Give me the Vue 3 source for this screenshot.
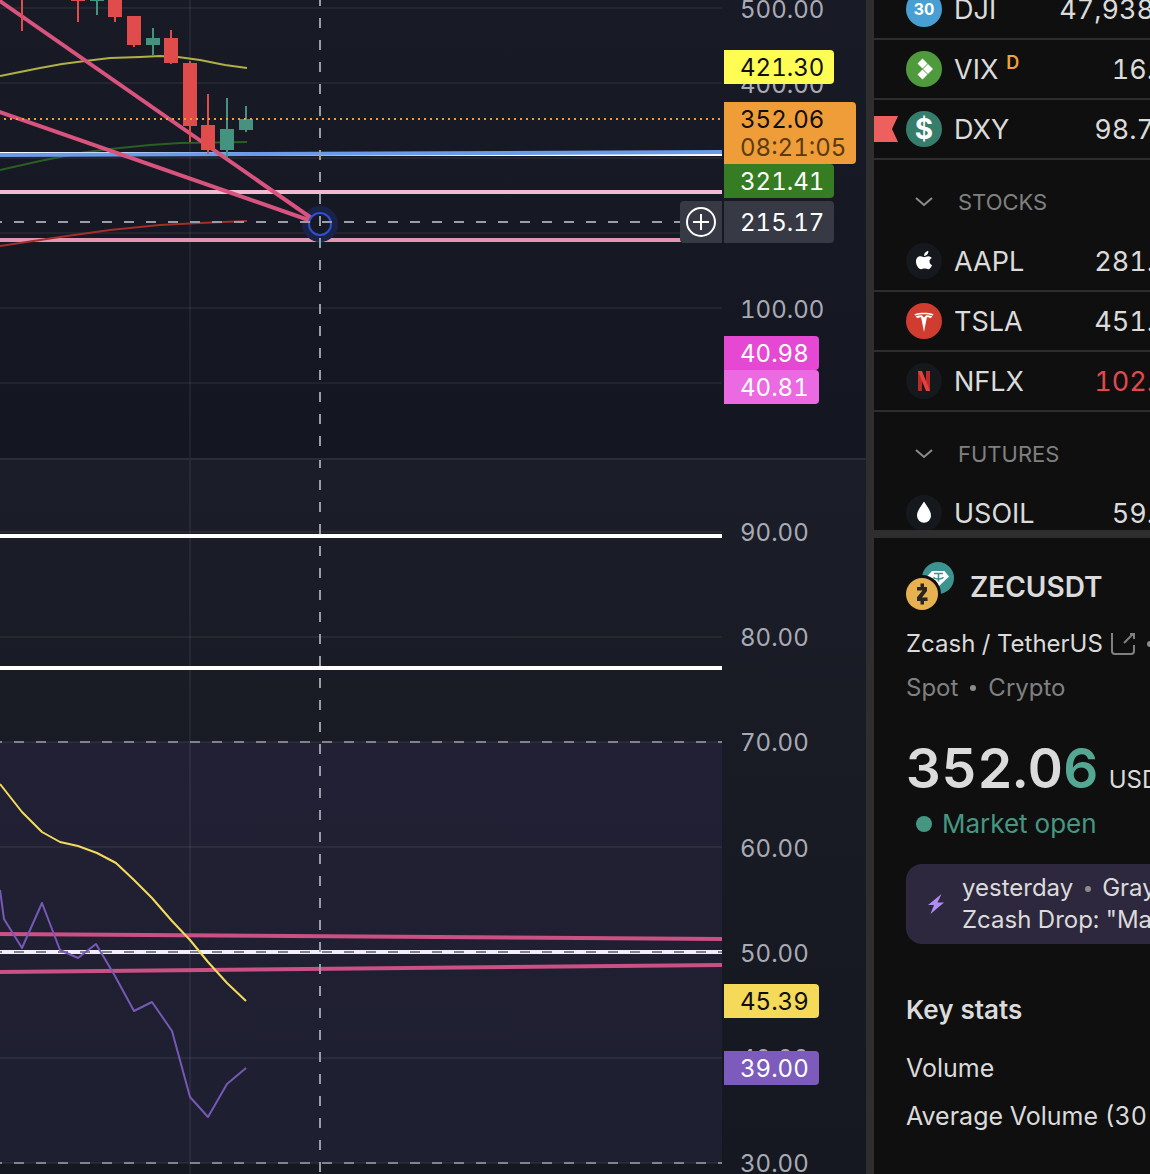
<template>
  <div class="workspace">
    <main class="chart">
      <section class="pane pane-price">
        <svg class="plot" aria-label="Price chart">
          <g class="grid">
            <line v-for="y in priceGrid" :key="y" x1="0" :y1="y" x2="100%" :y2="y" />
            <line x1="190" y1="0" x2="190" y2="100%" />
          </g>

          <polyline class="ma ma-yellow" :points="toPoints(maYellow)" />
          <polyline class="ma ma-green" :points="toPoints(maGreen)" />

          <line class="level level-white" x1="0" y1="154" x2="100%" y2="154" />
          <line class="level level-blue" x1="0" y1="155" x2="100%" y2="152" />
          <line class="level level-pink-light" x1="0" y1="192" x2="100%" y2="192" />
          <line class="level level-pink" x1="0" y1="240" x2="100%" y2="240" />
          <polyline class="ma ma-red" :points="toPoints(maRed)" />

          <circle class="anchor-halo" cx="320" cy="224" r="18" />
          <line class="trend" x1="-6" y1="-3" x2="320" y2="224" />
          <line class="trend" x1="-6" y1="110" x2="320" y2="224" />

          <g v-for="c in candles" :key="c.x" :class="c.up ? 'candle-up' : 'candle-down'">
            <rect :x="c.x - 1" :y="c.high" width="2" :height="c.low - c.high" />
            <rect v-if="c.bottom" :x="c.x - 7" :y="c.top" width="14" :height="c.bottom - c.top" />
          </g>

          <line class="last-price" x1="4" y1="119" x2="100%" y2="119" />

          <circle class="anchor" cx="320" cy="224" r="11" />

          <line class="crosshair" x1="-8" y1="222" x2="100%" y2="222" />
          <line class="crosshair" x1="320" y1="-4" x2="320" y2="100%" />
        </svg>

        <button class="add-alert" type="button" aria-label="Add alert at price">
          <svg width="32" height="32" viewBox="0 0 32 32">
            <circle cx="16" cy="16" r="14" />
            <path d="M16 8v16M8 16h16" />
          </svg>
        </button>

        <div class="axis">
          <span
            v-for="tick in priceTicks"
            :key="tick.text"
            class="tick"
            :style="{ top: tick.y + 'px' }"
            >{{ tick.text }}</span
          >
          <span
            v-for="tag in priceTags"
            :key="tag.text"
            class="tag"
            :class="tag.color"
            :style="{ top: tag.y + 'px' }"
          >
            {{ tag.text }}
            <small v-if="tag.countdown">{{ tag.countdown }}</small>
          </span>
        </div>
      </section>

      <section class="pane pane-rsi">
        <svg class="plot" aria-label="RSI chart">
          <defs>
            <linearGradient id="band" x1="0" y1="0" x2="0" y2="1">
              <stop offset="0" stop-color="#222034" />
              <stop offset="1" stop-color="#1e1f31" />
            </linearGradient>
          </defs>
          <rect x="0" y="282" width="100%" height="421" fill="url(#band)" />
          <g class="grid">
            <line v-for="y in rsiGrid" :key="y" x1="0" :y1="y" x2="100%" :y2="y" />
            <line x1="190" y1="0" x2="190" y2="100%" />
          </g>

          <line class="level level-white" x1="0" y1="76" x2="100%" y2="76" />
          <line class="level level-white" x1="0" y1="208" x2="100%" y2="208" />
          <line class="rsi-trend" x1="0" y1="474" x2="100%" y2="479" />
          <line class="rsi-trend" x1="0" y1="512" x2="100%" y2="505" />
          <line class="level level-mid" x1="0" y1="492" x2="100%" y2="492" />

          <line
            v-for="y in [282, 492, 703]"
            :key="y"
            class="band-edge"
            x1="-8"
            :y1="y"
            x2="100%"
            :y2="y"
          />
          <polyline class="rsi" :points="toPoints(rsi)" />
          <polyline class="rsi-ma" :points="toPoints(rsiMa)" />
          <line class="crosshair" x1="320" y1="-2" x2="320" y2="100%" />
        </svg>

        <div class="axis">
          <span
            v-for="tick in rsiTicks"
            :key="tick.text"
            class="tick"
            :style="{ top: tick.y + 'px' }"
            >{{ tick.text }}</span
          >
          <span
            v-for="tag in rsiTags"
            :key="tag.text"
            class="tag"
            :class="tag.color"
            :style="{ top: tag.y + 'px' }"
            >{{ tag.text }}</span
          >
        </div>
      </section>
    </main>

    <aside class="sidebar">
      <div class="watchlist">
        <table>
          <tbody v-for="group in groups" :key="group.name">
            <tr v-if="group.name" class="group-row">
              <th colspan="2" scope="rowgroup">
                <button type="button" class="group-toggle">
                  <svg width="20" height="12" viewBox="0 0 20 12">
                    <path d="M2 2l8 7 8-7" />
                  </svg>
                  {{ group.name }}
                </button>
              </th>
            </tr>
            <tr v-for="item in group.items" :key="item.symbol" class="symbol-row">
              <td>
                <svg v-if="item.flagged" class="flag" width="24" height="26" viewBox="0 0 24 26">
                  <path d="M0 0h24l-6 13 6 13H0z" />
                </svg>
                <div class="symbol">
                  <span class="logo" :class="'logo-' + item.symbol.toLowerCase()">
                    <template v-if="item.symbol === 'DJI'">30</template>
                    <template v-else-if="item.symbol === 'DXY'">$</template>
                    <svg v-else-if="item.symbol === 'VIX'" viewBox="0 0 36 36">
                      <path
                        d="M16.500 7.500l5 5-5 5-5-5zM22 13l5 5-5 5-5-5zM16.500 18.500l5 5-5 5-5-5z"
                      />
                    </svg>
                    <svg v-else-if="item.symbol === 'AAPL'" viewBox="0 0 36 36">
                      <path
                        d="M22.300 8c.2 1.500-.4 2.700-1.200 3.600-.8.900-1.900 1.400-3 1.300-.1-1.400.5-2.600 1.200-3.400.8-.9 2-1.500 3-1.500zM25.700 15.100c-1.500.9-2.300 2-2.200 3.500.1 1.700 1 2.900 2.500 3.600-.8 2-2.200 4-3.900 4-1.300 0-1.900-.7-3.500-.7s-2.200.7-3.400.7c-2.800 0-5.200-4.300-5.200-7.700 0-3.400 2.200-5.200 4.500-5.200 1.600 0 2.800.9 3.700.9s2.300-1 4.100-1c1.400 0 2.600.7 3.400 1.900z"
                      />
                    </svg>
                    <svg v-else-if="item.symbol === 'TSLA'" viewBox="0 0 36 36">
                      <path
                        d="M8.500 11.200c5.600-1.900 13.400-1.900 19 0-.2.500-.4.900-.7 1.300-5.400-1.800-12.200-1.800-17.600 0-.3-.4-.5-.8-.7-1.300zM9.600 13.200c2-.6 4.200-.9 6.200-.9l2.200 2.200 2.200-2.200c2 0 4.200.3 6.200.9-.6 1-1.300 1.700-2.400 2.100-.2-.6-.9-1-3.100-1.100L18 29l-2.900-14.800c-2.200.1-2.900.5-3.100 1.100-1.100-.4-1.800-1.100-2.400-2.100z"
                      />
                    </svg>
                    <svg v-else-if="item.symbol === 'NFLX'" viewBox="0 0 36 36">
                      <rect class="nflx-side" x="12" y="8" width="4" height="20" />
                      <rect class="nflx-side" x="20" y="8" width="4" height="20" />
                      <polygon class="nflx-bar" points="12,8 16,8 24,28 20,28" />
                    </svg>
                    <svg v-else viewBox="0 0 36 36">
                      <path d="M18 6.500c3.500 5.500 7 9.500 7 14.200a7 7 0 0 1-14 0c0-4.700 3.500-8.700 7-14.200z" />
                    </svg>
                  </span>
                  <span class="name">{{ item.symbol }}</span>
                  <sup v-if="item.delayed">D</sup>
                </div>
              </td>
              <td class="last" :class="{ falling: item.falling }">{{ item.last }}</td>
            </tr>
          </tbody>
        </table>
      </div>

      <div class="details">
        <header class="details-head">
          <svg class="pair-logo" width="48" height="48" viewBox="0 0 48 48">
            <circle cx="32" cy="16" r="16" fill="#3b9490" />
            <path d="M26 9h12.500l4.500 5.500L32 25 21 14.500z" fill="#fff" />
            <path
              d="M28 11.500h9M32.500 11.500v8M28 15c-1 2.500 9 2.500 9 0"
              fill="none"
              stroke="#3b9490"
              stroke-width="1.500"
            />
            <circle cx="16" cy="32" r="19" fill="#0f0f0f" />
            <circle cx="16" cy="32" r="16" fill="#e6b150" />
            <path
              d="M11 25h10v4l-5 6.500h5.500v3.500H11v-3.800l5.500-6.700H11zM14.500 21.500h3.500v4h-3.500zM14.500 38.500h3.500v4h-3.500z"
              fill="#292521"
            />
          </svg>
          <h2>ZECUSDT</h2>
        </header>

        <p class="full-name">
          <a href="#">
            Zcash / TetherUS
            <svg width="24" height="22" viewBox="0 0 24 22">
              <path d="M1 0v18a3 3 0 0 0 3 3h16a3 3 0 0 0 3-3v-6M13 10l9-9M19 1h4v5" />
            </svg>
          </a>
          <i class="dot"></i>
        </p>
        <p class="kind">Spot <i class="dot"></i> Crypto</p>

        <p class="quote">
          <strong>352.0<em>6</em></strong>
          <span>USD</span>
        </p>
        <p class="status"><i></i>Market open</p>

        <a class="news" href="#">
          <svg width="16" height="20" viewBox="0 0 16 20">
            <path d="M13.500 0L0 11h6L2.500 20 16 8.500H9.500z" />
          </svg>
          <span>yesterday <i class="dot"></i> Gray<br />Zcash Drop: "Ma</span>
        </a>

        <h3>Key stats</h3>
        <ul class="stats">
          <li>Volume</li>
          <li>Average Volume (30</li>
        </ul>
      </div>
    </aside>
  </div>
</template>

<script setup>
import { ref } from 'vue'

const priceGrid = [8, 83, 158, 233, 308, 383]
const rsiGrid = [72, 177, 282, 387, 492, 598, 703]

const priceTicks = [
  { text: '500.00', y: 9 },
  { text: '400.00', y: 84 },
  { text: '100.00', y: 309 },
]

const priceTags = ref([
  { text: '421.30', y: 67, color: 'yellow' },
  { text: '352.06', y: 133, color: 'orange', countdown: '08:21:05' },
  { text: '321.41', y: 181, color: 'green' },
  { text: '215.17', y: 222, color: 'cursor' },
  { text: '40.98', y: 353, color: 'magenta' },
  { text: '40.81', y: 387, color: 'violet' },
])

const rsiTicks = [
  { text: '90.00', y: 72 },
  { text: '80.00', y: 177 },
  { text: '70.00', y: 282 },
  { text: '60.00', y: 388 },
  { text: '50.00', y: 493 },
  { text: '40.00', y: 598 },
  { text: '30.00', y: 703 },
]

const rsiTags = ref([
  { text: '45.39', y: 541, color: 'gold' },
  { text: '39.00', y: 608, color: 'purple' },
])

const candles = [
  { x: 22, high: 0, low: 31 },
  { x: 78, high: 0, low: 22, top: 0, bottom: 1 },
  { x: 97, high: 0, low: 15, top: 0, bottom: 1, up: true },
  { x: 115, high: 0, low: 22, top: 0, bottom: 17 },
  { x: 134, high: 16, low: 47, top: 16, bottom: 45 },
  { x: 153, high: 28, low: 55, top: 38, bottom: 45, up: true },
  { x: 171, high: 30, low: 64, top: 38, bottom: 63 },
  { x: 190, high: 61, low: 142, top: 63, bottom: 126 },
  { x: 208, high: 94, low: 154, top: 125, bottom: 150 },
  { x: 227, high: 98, low: 157, top: 129, bottom: 150, up: true },
  { x: 246, high: 106, low: 132, top: 119, bottom: 130, up: true },
]

const maYellow = [
  [0, 76], [20, 72], [40, 68], [62, 64], [85, 61], [110, 58], [140, 57],
  [160, 56], [178, 57], [200, 60], [225, 65], [247, 68],
]
const maGreen = [[0, 170], [40, 161], [80, 153], [110, 149], [150, 145], [180, 143], [247, 142]]
const maRed = [[0, 246], [60, 237], [110, 230], [160, 225], [200, 223], [247, 221]]

const rsi = [
  [0, 430], [4, 459], [22, 488], [42, 443], [60, 490], [78, 498], [96, 484], [115, 516],
  [134, 551], [152, 542], [172, 571], [190, 637], [208, 657], [227, 624], [246, 608],
]
const rsiMa = [
  [0, 324], [22, 352], [42, 372], [60, 382], [78, 386], [97, 393], [116, 403], [134, 420],
  [152, 438], [172, 461], [190, 480], [208, 502], [227, 523], [246, 541],
]

const groups = ref([
  {
    name: '',
    items: [
      { symbol: 'DJI', last: '47,938' },
      { symbol: 'VIX', last: '16.', delayed: true },
      { symbol: 'DXY', last: '98.7', flagged: true },
    ],
  },
  {
    name: 'STOCKS',
    items: [
      { symbol: 'AAPL', last: '281.' },
      { symbol: 'TSLA', last: '451.' },
      { symbol: 'NFLX', last: '102.', falling: true },
    ],
  },
  {
    name: 'FUTURES',
    items: [{ symbol: 'USOIL', last: '59.' }],
  },
])

const toPoints = (list) => list.map((p) => p.join(',')).join(' ')
</script>

<style>
body {
  background: #0f0f0f;
}
</style>

<style scoped>
.workspace {
  display: flex;
  height: 100vh;
  overflow: hidden;
  background: #2e2e2e;
  color: #dbdbdb;
  font-family: Inter, 'Liberation Sans', sans-serif;
  font-variant-numeric: tabular-nums;
  font-size: 24px;
  line-height: 32px;
}

.chart {
  flex: 1;
  min-width: 0;
  display: flex;
  flex-direction: column;
}

.pane {
  position: relative;
  display: flex;
  overflow: hidden;
}

.pane-price {
  flex: 0 0 460px;
  box-sizing: border-box;
  border-bottom: 2px solid #2a2d38;
  background: linear-gradient(#181a25, #141722);
}

.pane-rsi {
  flex: 1;
  background: linear-gradient(#1b1d28, #151820);
}

.plot {
  flex: 1;
  min-width: 0;
  height: 100%;
}

.axis {
  position: relative;
  flex: 0 0 144px;
}

/* chart lines */
.grid line {
  stroke: rgba(240, 243, 250, 0.06);
  stroke-width: 2;
}

polyline {
  fill: none;
  stroke-width: 2;
  stroke-linejoin: round;
}

.ma-yellow {
  stroke: #b0b045;
}

.ma-green {
  stroke: #2b5e25;
}

.ma-red {
  stroke: #a12f2a;
}

.level {
  stroke-width: 4;
}

.level-white {
  stroke: #fff;
}

.level-mid {
  stroke: #f3eefc;
}

.level-blue {
  stroke: #6a9bea;
}

.level-pink-light {
  stroke: #f0bccf;
}

.level-pink {
  stroke: #e396b2;
}

.trend {
  stroke: #d9537f;
  stroke-width: 4;
}

.rsi-trend {
  stroke: #cb5084;
  stroke-width: 4;
}

.candle-up {
  fill: #45937f;
}

.candle-down {
  fill: #e04c4b;
}

.last-price {
  stroke: #ef9f3a;
  stroke-width: 2;
  stroke-dasharray: 2 4;
}

.crosshair,
.band-edge {
  stroke: #9b9da6;
  stroke-width: 2;
  stroke-dasharray: 10 12;
}

.band-edge {
  stroke: #82828f;
}

.anchor-halo {
  fill: #1a2347;
}

.anchor {
  fill: #161925;
  stroke: #3050d0;
  stroke-width: 2;
}

.rsi {
  stroke: #7659b5;
}

.rsi-ma {
  stroke: #f3dc5d;
}

/* price axis */
.tick,
.tag {
  position: absolute;
  left: 2px;
  box-sizing: border-box;
  padding: 4px 10px 2px 16px;
  line-height: 28px;
  transform: translateY(-50%);
}

.tick {
  color: #a9abb4;
}

.tag {
  border-radius: 0 4px 4px 0;
  color: #fff;
}

.tag small {
  display: block;
  font-size: 24px;
  color: #5c3a10;
}

.yellow {
  background: #fffd54;
  color: #0f0f0f;
}

.orange {
  background: #ef9d38;
  color: #0f0f0f;
}

.green {
  background: #367c22;
}

.cursor {
  padding-top: 8px;
  padding-bottom: 6px;
  background: #373944;
}

.magenta {
  background: #e549d4;
}

.violet {
  background: #eb6ae2;
}

.gold {
  background: #f5d958;
  color: #0f0f0f;
}

.purple {
  background: #7c5bbd;
}

.add-alert {
  position: absolute;
  right: 144px;
  top: 201px;
  width: 42px;
  height: 42px;
  padding: 5px;
  border: none;
  border-radius: 4px 0 0 4px;
  background: #373944;
  cursor: pointer;
}

.add-alert svg {
  display: block;
  fill: none;
  stroke: #fff;
  stroke-width: 2;
}

/* sidebar */
.sidebar {
  flex: 0 0 276px;
  display: flex;
  flex-direction: column;
  gap: 8px;
  margin-left: 8px;
  overflow: hidden;
  white-space: nowrap;
}

.watchlist {
  flex: 0 0 530px;
  overflow: hidden;
  background: #0f0f0f;
}

.watchlist table {
  width: 280px;
  margin-top: -20px;
  border-collapse: separate;
  border-spacing: 0;
  font-size: 27px;
}

.symbol-row td {
  position: relative;
  height: 58px;
  padding: 0;
  border-bottom: 2px solid #2e2e2e;
}

.symbol {
  display: flex;
  align-items: center;
  gap: 12px;
  padding-left: 32px;
}

.name {
  padding-top: 2px;
}

.symbol sup {
  align-self: flex-start;
  margin-left: -4px;
  font-size: 18px;
  line-height: 24px;
  font-weight: 600;
  color: #f0a03c;
}

.symbol-row .last {
  padding-top: 2px;
  height: 56px;
  text-align: right;
}

.falling {
  color: #e0494d;
}

.flag {
  position: absolute;
  left: 0;
  top: 16px;
  fill: #ee605d;
}

.logo {
  flex: 0 0 36px;
  height: 36px;
  border-radius: 50%;
  background: #15181c;
  color: #fff;
  font-weight: 700;
  line-height: 36px;
  text-align: center;
}

.logo svg {
  display: block;
  fill: #fff;
}

.logo-dji {
  background: #479fd3;
  font-size: 16px;
}

.logo-vix {
  background: #4f9a3c;
}

.logo-dxy {
  background: #367e6b;
  font-size: 28px;
}

.logo-tsla {
  background: #d13c31;
}

.logo .nflx-side {
  fill: #b92b26;
}

.logo .nflx-bar {
  fill: #e8413b;
}

.group-row th {
  height: 72px;
  padding: 12px 0 0 40px;
  box-sizing: border-box;
  text-align: left;
}

.group-toggle {
  display: flex;
  align-items: center;
  gap: 24px;
  padding: 0;
  border: none;
  background: none;
  color: #808080;
  font: inherit;
  font-size: 22px;
  font-weight: 400;
  line-height: 32px;
  cursor: pointer;
}

.group-toggle svg {
  fill: none;
  stroke: #8c8c8c;
  stroke-width: 2;
}

.details {
  flex: 1;
  padding: 24px 0 0 32px;
  background: #0f0f0f;
}

.details p,
.details h2,
.details h3 {
  margin: 0;
}

.details-head {
  display: flex;
  align-items: center;
  gap: 16px;
}

.details-head h2 {
  padding-top: 2px;
  font-size: 28px;
  font-weight: 600;
}

.full-name,
.kind {
  display: flex;
  align-items: center;
  gap: 12px;
}

.details .full-name {
  margin-top: 18px;
}

.full-name a {
  display: flex;
  align-items: center;
  gap: 8px;
  color: inherit;
  text-decoration: none;
}

.full-name svg {
  fill: none;
  stroke: #808080;
  stroke-width: 2;
}

.details .kind {
  margin-top: 12px;
  color: #808080;
}

.dot {
  display: inline-block;
  flex: none;
  width: 6px;
  height: 6px;
  border-radius: 50%;
  background: #8c8c8c;
  vertical-align: middle;
}

.quote {
  display: flex;
  align-items: baseline;
  gap: 10px;
  line-height: 64px;
}

.details .quote {
  height: 64px;
  margin-top: 32px;
}

.quote strong {
  font-size: 55px;
  font-weight: 600;
}

.quote em {
  font-style: normal;
  color: #53a793;
}

.status {
  display: flex;
  align-items: center;
  gap: 10px;
  padding-left: 10px;
  font-size: 26px;
  color: #459782;
}

.details .status {
  margin-top: 8px;
}

.status i {
  width: 16px;
  height: 16px;
  border-radius: 50%;
  background: #459782;
}

.news {
  display: flex;
  align-items: center;
  gap: 18px;
  margin-top: 24px;
  padding: 8px 0 8px 22px;
  border-radius: 16px 0 0 16px;
  background: #2e283e;
  color: inherit;
  text-decoration: none;
}

.news svg {
  flex: none;
  fill: #b08cf5;
}

.news .dot {
  margin: 0 5px;
}

.details h3 {
  margin-top: 50px;
  font-size: 26px;
  font-weight: 600;
}

.stats {
  margin: 18px 0 0;
  padding: 0;
  list-style: none;
  font-size: 25px;
  line-height: 48px;
}
</style>
